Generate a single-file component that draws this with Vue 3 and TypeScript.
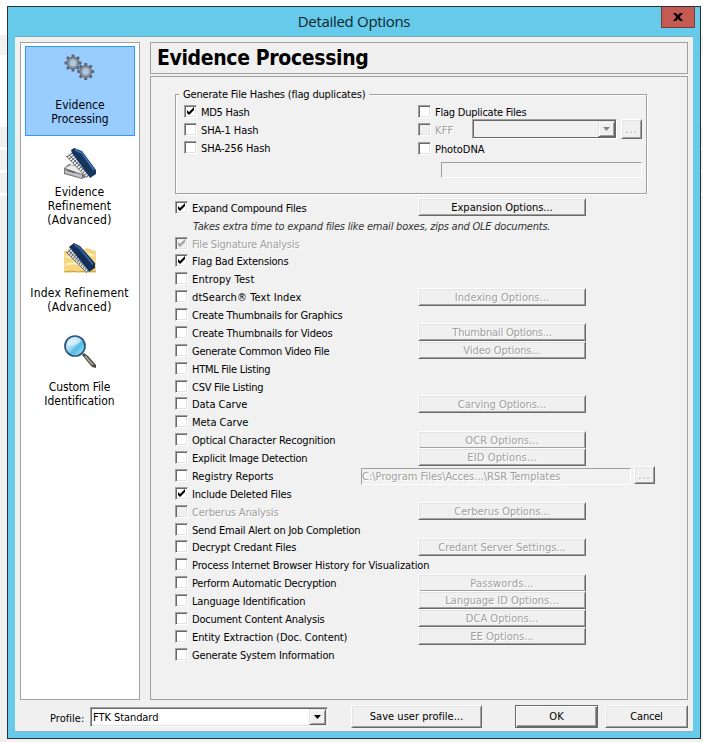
<script setup lang="ts">
import type { Directive } from 'vue'

interface Action { text: string; w: number; low?: boolean }
interface Option {
  text: string
  w: number
  checked?: boolean
  disabled?: boolean
  short?: boolean
  action?: Action
  path?: boolean
}

// Spreads the letters of a caption so that it fills the given width.
const vFit: Directive<HTMLElement, number> = {
  mounted(el, binding) {
    const range = document.createRange()
    range.selectNodeContents(el)
    const natural = range.getBoundingClientRect().width
    const count = (el.textContent ?? '').length
    el.style.letterSpacing = `${(binding.value + 0.4 - natural) / count}px`
  },
}

const options: Option[] = [
  { text: 'File Signature Analysis', w: 107, checked: true, disabled: true, short: true },
  { text: 'Flag Bad Extensions', w: 96, checked: true },
  { text: 'Entropy Test', w: 62 },
  { text: 'dtSearch® Text Index', w: 109, action: { text: 'Indexing Options...', w: 94, low: true } },
  { text: 'Create Thumbnails for Graphics', w: 150 },
  { text: 'Create Thumbnails for Videos', w: 140, action: { text: 'Thumbnail Options...', w: 99 } },
  { text: 'Generate Common Video File', w: 137, action: { text: 'Video Options...', w: 77 } },
  { text: 'HTML File Listing', w: 78 },
  { text: 'CSV File Listing', w: 71, short: true },
  { text: 'Data Carve', w: 55, action: { text: 'Carving Options...', w: 88, low: true } },
  { text: 'Meta Carve', w: 56 },
  { text: 'Optical Character Recognition', w: 143, action: { text: 'OCR Options...', w: 73, low: true } },
  { text: 'Explicit Image Detection', w: 115, action: { text: 'EID Options...', w: 69 } },
  { text: 'Registry Reports', w: 81, path: true },
  { text: 'Include Deleted Files', w: 99, checked: true },
  { text: 'Cerberus Analysis', w: 86, disabled: true, action: { text: 'Cerberus Options...', w: 95 } },
  { text: 'Send Email Alert on Job Completion', w: 168, short: true },
  { text: 'Decrypt Credant Files', w: 104, action: { text: 'Credant Server Settings...', w: 127, low: true } },
  { text: 'Process Internet Browser History for Visualization', w: 237 },
  { text: 'Perform Automatic Decryption', w: 144, action: { text: 'Passwords...', w: 63, low: true } },
  { text: 'Language Identification', w: 113, action: { text: 'Language ID Options...', w: 113 } },
  { text: 'Document Content Analysis', w: 132, action: { text: 'DCA Options...', w: 72 } },
  { text: 'Entity Extraction (Doc. Content)', w: 155, action: { text: 'EE Options...', w: 63 } },
  { text: 'Generate System Information', w: 142 },
]

const hashes = [
  { text: 'MD5 Hash', w: 48, checked: true },
  { text: 'SHA-1 Hash', w: 57, checked: false },
  { text: 'SHA-256 Hash', w: 69, checked: false },
]

const teeth = [0, 45, 90, 135, 180, 225, 270, 315]
const combTeeth = Array.from({ length: 11 }, (_, i) => i * 2)
</script>

<template>
  <div class="page">
    <div class="window">
      <header class="titlebar">
        <span v-fit="112" class="caption">Detailed Options</span>
        <button class="close" aria-label="Close">
          <svg width="10" height="8" viewBox="0 0 10 8"><path d="M0 0h3l2 2.2L7 0h3L6.6 4 10 8H7L5 5.8 3 8H0l3.4-4z" /></svg>
        </button>
      </header>

      <div class="client">
        <div class="upper">
          <nav class="sidebar">
            <a class="nav selected">
              <svg class="icon" width="32" height="32" viewBox="0 0 32 32">
                <g v-for="g in [{ x: 9, y: 10 }, { x: 21.7, y: 18.5 }]" :key="g.x" :transform="`translate(${g.x} ${g.y})`">
                  <rect v-for="t in teeth" :key="t" x="-1.4" y="-8.5" width="2.8" height="4" fill="#59647a" :transform="`rotate(${t})`" />
                  <circle r="4.8" fill="none" stroke="#68707e" stroke-width="3.4" />
                  <circle r="4.2" fill="#a9c9e9" stroke="#94989f" stroke-width="2" />
                </g>
              </svg>
              <span v-fit="49">Evidence</span><span v-fit="57">Processing</span>
            </a>
            <a class="nav refine">
              <svg class="icon" width="32" height="32" viewBox="0 0 32 32">
                <path d="M0 20l5-4 21 5v6l-8 4L0 26z" fill="#777" />
                <path d="M1 20l6-3 18 5-7 4z" fill="#ececec" />
                <path d="M1 22l17 5v3L1 25z" fill="#c4c4c4" />
                <path d="M3 22.5l8 2.3" stroke="#555" />
                <path d="M2 8L9 3 29 22 23 30z" fill="#e8e8e8" />
                <path v-for="t in combTeeth" :key="t" :d="`M${9 + t * .9} ${4.5 + t * .9}L${3 + t} ${9 + t}`" stroke="#424a55" stroke-width=".9" />
                <path d="M2 8l21 22M5 7l20 20" fill="none" stroke="#5d646e" stroke-width=".8" />
                <path d="M7 2l3-2 8 3 14 19v4l-6 4-2-3L8 5z" fill="#17365f" />
                <path d="M11 1.5l7 3.5 12 17" fill="none" stroke="#3c70ae" stroke-width="2" />
              </svg>
              <span v-fit="49">Evidence</span><span v-fit="63">Refinement</span><span v-fit="64">(Advanced)</span>
            </a>
            <a class="nav index">
              <svg class="icon" width="32" height="32" viewBox="0 0 32 32">
                <path d="M0 8l4-1 1-3 8 2 5 1 5-2 9 3v22l-6-1-5 1-8-1-7 1-6-1z" fill="#f5d783" />
                <path d="M1 22c9-5 18 3 30-4M1 13c8 5 20-6 30 0" fill="none" stroke="#fff0bb" stroke-width="2" />
                <path d="M0 29l7-1 7 1 7-1 5 1 6-1" fill="none" stroke="#c89c41" />
                <path d="M2 9L8 4 28 22 23 30z" fill="#ddd" />
                <path v-for="t in combTeeth" :key="t" :d="`M${8 + t * .92} ${5 + t * .88}L${3 + t} ${10 + t * .95}`" stroke="#424a55" stroke-width=".9" />
                <path d="M2 9l21 21M5 8l20 19" fill="none" stroke="#5d646e" stroke-width=".8" />
                <path d="M5 4l5-4 6 3 15 17v5l-6 4-1-2L7 6z" fill="#142e58" />
                <path d="M10 1.5l5 3 14 17" fill="none" stroke="#34629c" stroke-width="2" />
              </svg>
              <span v-fit="98">Index Refinement</span><span v-fit="64">(Advanced)</span>
            </a>
            <a class="nav custom">
              <svg class="icon" width="32" height="33" viewBox="0 0 32 33">
                <defs>
                  <linearGradient id="lens" x1="0" y1="0" x2="1" y2="1">
                    <stop offset="0" stop-color="#edf9ff" /><stop offset=".45" stop-color="#9bd8f4" /><stop offset=".6" stop-color="#59b8e6" /><stop offset="1" stop-color="#a8f0ff" />
                  </linearGradient>
                </defs>
                <path d="M18 20l2-2 4 3 8 9v3l-4-1z" fill="#4c4a3e" />
                <path d="M21 21l8 9" stroke="#b5b3a4" stroke-width="1.5" />
                <circle cx="11" cy="11" r="10" fill="url(#lens)" stroke="#29547a" stroke-width="1.7" />
                <path d="M3 11C4 4 11 1 17 5c-3 5-8 6-14 6z" fill="#fff" opacity=".45" />
              </svg>
              <span v-fit="61">Custom File</span><span v-fit="70">Identification</span>
            </a>
          </nav>

          <main class="content">
            <h1 class="heading"><span v-fit="211">Evidence Processing</span></h1>
            <section class="panel">
              <fieldset class="group">
                <legend><span v-fit="182">Generate File Hashes (flag duplicates)</span></legend>
                <div class="column">
                  <label v-for="h in hashes" :key="h.text" class="check">
                    <i class="box"><svg v-if="h.checked" width="9" height="9" viewBox="0 0 9 9"><path d="M1 3v3l2 2 5-5V0L3 5z" /></svg></i>
                    <span v-fit="h.w">{{ h.text }}</span>
                  </label>
                </div>
                <div class="column right">
                  <label class="check"><i class="box"></i><span v-fit="91">Flag Duplicate Files</span></label>
                  <div class="kff">
                    <label class="check disabled"><i class="box"></i><span v-fit="18">KFF</span></label>
                    <div class="combo off"><b class="arrow"><svg width="7" height="4"><path d="M0 0h7L3.5 4z" /></svg></b></div>
                    <button class="btn dots" disabled>...</button>
                  </div>
                  <label class="check photo"><i class="box"></i><span v-fit="49">PhotoDNA</span></label>
                  <div class="field photo-field"></div>
                </div>
              </fieldset>

              <div class="row expand">
                <label class="check"><i class="box"><svg width="9" height="9" viewBox="0 0 9 9"><path d="M1 3v3l2 2 5-5V0L3 5z" /></svg></i><span v-fit="114">Expand Compound Files</span></label>
                <button class="btn action"><span v-fit="101">Expansion Options...</span></button>
              </div>
              <p class="hint"><span v-fit="357">Takes extra time to expand files like email boxes, zips and OLE documents.</span></p>

              <div v-for="o in options" :key="o.text" class="row" :class="{ short: o.short }">
                <label class="check" :class="{ disabled: o.disabled }">
                  <i class="box"><svg v-if="o.checked" width="9" height="9" viewBox="0 0 9 9"><path d="M1 3v3l2 2 5-5V0L3 5z" /></svg></i>
                  <span v-fit="o.w">{{ o.text }}</span>
                </label>
                <button v-if="o.action" class="btn action" :class="{ low: o.action.low }" disabled><span v-fit="o.action.w">{{ o.action.text }}</span></button>
                <div v-if="o.path" class="path">
                  <div class="field"><span v-fit="198">C:\Program Files\Acces...\RSR Templates</span></div>
                  <button class="btn dots" disabled>...</button>
                </div>
              </div>
            </section>
          </main>
        </div>

        <footer class="footer">
          <span v-fit="34" class="profile">Profile:</span>
          <div class="combo"><span v-fit="65">FTK Standard</span><b class="arrow"><svg width="7" height="4"><path d="M0 0h7L3.5 4z" /></svg></b></div>
          <button class="btn save"><span v-fit="93">Save user profile...</span></button>
          <button class="btn ok"><span v-fit="14">OK</span></button>
          <button class="btn cancel"><span v-fit="32">Cancel</span></button>
        </footer>
      </div>
    </div>
  </div>
</template>

<style>
html, body { margin: 0; overflow: hidden; }
</style>

<style scoped>
* { box-sizing: border-box; }
.page {
  width: 703px; height: 742px; padding: 6px 2px 3px 7px;
  background: linear-gradient(#fff 35px, #f2f2f2 35px 55px, #fff 55px 127px, #f0f0f0 127px 147px, #fff 147px 150px, #f0f0f0 150px 170px, #fff 170px 173px, #f0f0f0 173px 193px, #fff 193px 196px, #f0f0f0 196px);
  font: 11px/13px "DejaVu Sans Condensed", "DejaVu Sans", sans-serif; font-stretch: condensed;
  color: #000; white-space: nowrap;
}
.window { width: 694px; height: 733px; border: 1px solid #2b3236; background: #66cbea; padding: 0 7px 6px; }
.titlebar { height: 29px; display: flex; justify-content: center; position: relative; }
.caption { font: 15px/29px "Open Sans", sans-serif; color: #10242c; }
.close { position: absolute; right: -2px; top: 0; width: 34px; height: 21px; padding: 0; border: 1px solid #7c3a38; border-top: 0; background: #c45a52; display: flex; align-items: center; justify-content: center; }
.client { height: 696px; background: #f0f0f0; border-top: 1px solid #7ba9bb; border-bottom: 1px solid #8fb4c1; padding: 5px 5px 0; }
.upper { display: flex; gap: 10px; height: 658px; }
.sidebar { width: 120px; border: 1px solid #a0a0a0; background: #fff; padding: 3px 5px 3px 4px; font-size: 12px; line-height: 14px; }
.nav { display: flex; flex-direction: column; align-items: center; }
.nav .icon { display: block; margin-bottom: 12px; }
.selected { width: 110px; height: 90px; border: 1px solid #3399ff; background: #99ccff; padding-top: 6px; }
.selected .icon { margin-bottom: 13px; }
.refine { padding-top: 12px; height: 107px; }
.refine .icon { margin-bottom: 5px; }
.index { height: 92px; }
.index .icon { margin-bottom: 11px; }
.custom .icon { margin-bottom: 12px; }
.content { width: 538px; display: flex; flex-direction: column; gap: 2px; }
.heading { margin: 0; height: 32px; border: 1px solid #a0a0a0; padding-left: 6px; font-size: 21px; line-height: 31px; font-weight: bold; }
.panel { height: 624px; border: 1px solid #a0a0a0; padding: 12px 24px 0; background: #f1f1f1; }
.group { position: relative; margin: 5px 0 0; width: 472px; min-width: 0; height: 100px; border: 1px solid #a0a0a0; box-shadow: 1px 1px 0 #fff, inset 1px 1px 0 #fff; padding: 0 0 0 8px; display: flex; }
.group legend { position: absolute; top: -7px; left: 3px; padding: 0 4px; background: #f1f1f1; }
.column { flex: none; width: 234px; padding-top: 10px; display: flex; flex-direction: column; gap: 5px; }
.column.right { width: 228px; }
.check { flex: none; display: flex; align-items: flex-start; gap: 4px; height: 13px; }
.check span { position: relative; top: 1px; }
.box { flex: none; width: 13px; height: 13px; background: #fff; border: 1px solid; border-color: #a0a0a0 #fff #fff #a0a0a0; box-shadow: inset 1px 1px 0 #696969, inset -1px -1px 0 #e3e3e3; padding: 1px; display: flex; }
.box svg { display: block; }
.disabled { color: #a0a0a0; text-shadow: 1px 1px 0 #fff; }
.disabled .box { background: #f0f0f0; }
.disabled .box path { fill: #a0a0a0; }
.kff { display: flex; height: 13px; }
.kff .check { width: 54px; }
.kff .combo { width: 145px; margin-top: -4px; }
.kff .dots { margin: -4px 0 0 4px; height: 20px; }
.photo { margin-top: 1px; }
.photo-field { margin: 2px 0 0 23px; width: 201px; height: 16px; }
.field { flex: none; border: 1px solid; border-color: #a0a0a0 #fff #fff #a0a0a0; background: #f1f1f1; color: #a0a0a0; text-shadow: 1px 1px 0 #fff; }
.combo { flex: none; height: 20px; background: #fff; border: 1px solid; border-color: #a0a0a0 #fff #fff #a0a0a0; box-shadow: inset 1px 1px 0 #696969, inset -1px -1px 0 #e3e3e3; padding: 1px; display: flex; justify-content: space-between; }
.arrow { margin-left: auto; width: 17px; height: 16px; background: #f0f0f0; border: 1px solid; border-color: #e3e3e3 #696969 #696969 #e3e3e3; box-shadow: inset 1px 1px 0 #fff, inset -1px -1px 0 #a0a0a0; display: flex; align-items: center; justify-content: center; }
.off { background: #f1f1f1; box-shadow: inset 1px 1px 0 #696969, inset -1px -1px 0 #696969; }
.off path { fill: #888; }
.btn { flex: none; font: inherit; padding: 0; margin: 0; color: #000; border: 1px solid; border-color: #fff #696969 #696969 #fff; background: #f0f0f0; box-shadow: inset 1px 1px 0 #e3e3e3, inset -1px -1px 0 #a0a0a0; display: flex; align-items: center; justify-content: center; }
.btn:disabled { color: #a0a0a0; text-shadow: 1px 1px 0 #fff; }
.dots { width: 21px; height: 18px; letter-spacing: 1px; }
.row { display: flex; height: 18px; }
.row.short { height: 17px; }
.row .check { width: 243px; margin-top: 3px; }
.action { width: 168px; height: 18px; position: relative; }
.action.low { margin-top: 1px; }
.expand { margin-top: 4px; }
.hint { margin: 4px 0 0; padding-left: 18px; height: 14px; font-style: italic; color: #333; }
.path { display: flex; margin-left: -57px; }
.path .field { width: 270px; height: 17px; margin: 2px 3px 0 0; line-height: 15px; }
.footer { display: flex; padding: 5px 0 0 30px; }
.profile { width: 40px; margin-top: 7px; }
.footer .combo { width: 238px; margin-top: 2px; line-height: 17px; }
.footer .combo span { padding-left: 1px; }
.footer .btn { height: 23px; }
.save { width: 131px; margin-left: 23px; }
.footer .ok { width: 83px; margin-left: 33px; border-color: #696969; box-shadow: inset 1px 1px 0 #fff, inset -1px -1px 0 #696969, inset -2px -2px 0 #a0a0a0; }
.cancel { width: 83px; margin-left: 7px; }
</style>
